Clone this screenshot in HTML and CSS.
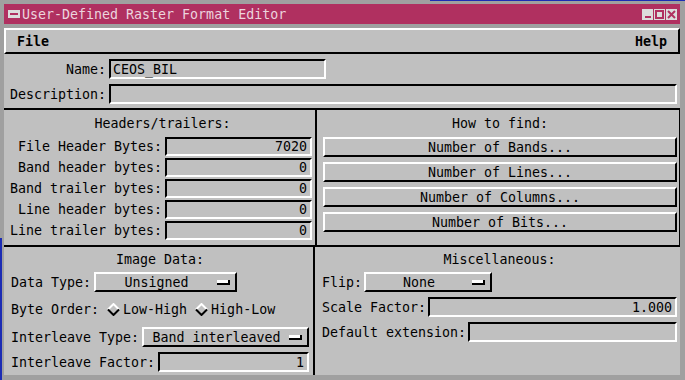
FILE: index.html
```html
<!DOCTYPE html>
<html lang="en">
<head>
  <meta charset="UTF-8" />
  <title>User-Defined Raster Format Editor</title>
  <link rel="stylesheet" href="styles.css">
</head>
<body>
  <div class="window">
    <div class="titlebar">
      <span class="wm-menu">
        <svg width="12" height="8" viewBox="0 0 12 8"><rect x="0" y="0" width="12" height="8" fill="#dcdcdc"/><rect x="2" y="3" width="8" height="2" fill="#b03060"/></svg>
      </span>
      <span class="title">User-Defined Raster Format Editor</span>
      <span class="wm-buttons">
        <span class="wm-btn"><svg width="11" height="11" viewBox="0 0 11 11"><rect x="3" y="7" width="6" height="2" fill="#b03060"/></svg></span>
        <span class="wm-btn"><svg width="11" height="11" viewBox="0 0 11 11"><rect x="2" y="2" width="7" height="7" fill="none" stroke="#b03060" stroke-width="2"/></svg></span>
        <span class="wm-btn"><svg width="11" height="11" viewBox="0 0 11 11"><path d="M2 2 L9 9 M9 2 L2 9" stroke="#b03060" stroke-width="2"/></svg></span>
      </span>
    </div>

    <div class="client">
      <div class="menubar">
        <span>File</span>
        <span>Help</span>
      </div>

      <div class="names">
        <div class="lbl">Name:</div>
        <div class="field name-field">CEOS_BIL</div>
        <div class="lbl">Description:</div>
        <div class="field"></div>
      </div>

      <div class="middle">
        <div class="panel headers">
          <div class="panel-title">Headers/trailers:</div>
          <div class="hdr-grid">
            <div class="lbl">File Header Bytes:</div><div class="field num">7020</div>
            <div class="lbl">Band header bytes:</div><div class="field num">0</div>
            <div class="lbl">Band trailer bytes:</div><div class="field num">0</div>
            <div class="lbl">Line header bytes:</div><div class="field num">0</div>
            <div class="lbl">Line trailer bytes:</div><div class="field num">0</div>
          </div>
        </div>
        <div class="panel howto">
          <div class="panel-title">How to find:</div>
          <div class="btn">Number of Bands...</div>
          <div class="btn">Number of Lines...</div>
          <div class="btn">Number of Columns...</div>
          <div class="btn">Number of Bits...</div>
        </div>
      </div>

      <div class="bottom">
        <div class="panel imagedata">
          <div class="panel-title">Image Data:</div>
          <div class="row r-type">
            <span>Data Type:</span>
            <div class="option w-type"><span class="opt-text">Unsigned</span><span class="opt-ind"></span></div>
          </div>
          <div class="row r-order">
            <span>Byte Order:</span>
            <span class="radio"><svg width="13" height="13" viewBox="0 0 13 13"><path d="M1 6.5 L6.5 1 L12 6.5" fill="none" stroke="#fff" stroke-width="2"/><path d="M1 6.5 L6.5 12 L12 6.5" fill="none" stroke="#000" stroke-width="2"/></svg>Low-High</span>
            <span class="radio"><svg width="13" height="13" viewBox="0 0 13 13"><path d="M1 6.5 L6.5 1 L12 6.5" fill="none" stroke="#fff" stroke-width="2"/><path d="M1 6.5 L6.5 12 L12 6.5" fill="none" stroke="#000" stroke-width="2"/></svg>High-Low</span>
          </div>
          <div class="row r-inter">
            <span>Interleave Type:</span>
            <div class="option w-inter"><span class="opt-text">Band interleaved</span><span class="opt-ind"></span></div>
          </div>
          <div class="row r-factor">
            <span>Interleave Factor:</span>
            <div class="field num grow">1</div>
          </div>
        </div>
        <div class="panel misc">
          <div class="panel-title">Miscellaneous:</div>
          <div class="row r-flip">
            <span>Flip:</span>
            <div class="option w-flip"><span class="opt-text">None</span><span class="opt-ind"></span></div>
          </div>
          <div class="row r-scale">
            <span>Scale Factor:</span>
            <div class="field num grow">1.000</div>
          </div>
          <div class="row r-ext">
            <span>Default extension:</span>
            <div class="field grow"></div>
          </div>
        </div>
      </div>
    </div>
  </div>
</body>
</html>
```

FILE: styles.css
```css
html, body {
  margin: 0;
  padding: 0;
}

body {
  width: 685px;
  height: 380px;
  overflow: hidden;
  background:
    linear-gradient(#1c2cb4, #1c2cb4) 0 238px / 2px 142px no-repeat,
    linear-gradient(#1c2cb4, #1c2cb4) 430px 0 / 255px 1px no-repeat,
    #a0a0a0;
  font-family: "DejaVu Sans Mono", monospace;
  font-size: 13.3px;
  color: #000;
}

.window {
  height: 380px;
  box-sizing: border-box;
  padding: 4px 5px 5px 4px;
  display: flex;
  flex-direction: column;
}

/* title bar */
.titlebar {
  height: 20px;
  background: #b03060;
  color: #ecd4de;
  display: flex;
  align-items: center;
  padding: 0 3px 0 4px;
  margin-bottom: 4px;
}

.wm-menu {
  display: flex;
  margin-right: 2px;
}

.title {
  flex: 1;
  white-space: pre;
}

.wm-buttons {
  display: flex;
  gap: 1px;
}

.wm-btn {
  width: 11px;
  height: 11px;
  background: #dcdcdc;
  display: flex;
}

/* client area */
.client {
  flex: 1;
  background: #c0c0c0;
  display: flex;
  flex-direction: column;
}

.menubar {
  height: 26px;
  box-sizing: border-box;
  border-top: 2px solid #fff;
  border-left: 2px solid #fff;
  border-bottom: 2px solid #000;
  border-right: 2px solid #000;
  padding: 0 11px;
  display: flex;
  justify-content: space-between;
  align-items: center;
  font-weight: bold;
}

.names {
  display: grid;
  grid-template-columns: 96px 1fr;
  column-gap: 3px;
  row-gap: 5px;
  padding: 5px 3px 4px 6px;
}

.lbl {
  text-align: right;
  white-space: pre;
  align-self: center;
}

.field {
  height: 20px;
  box-sizing: border-box;
  border-top: 2px solid #000;
  border-left: 2px solid #000;
  border-bottom: 2px solid #fff;
  border-right: 2px solid #fff;
  padding: 0 3px 0 2px;
  display: flex;
  align-items: center;
  white-space: pre;
}

.field.num {
  justify-content: flex-end;
}

.name-field {
  width: 217px;
}

.panel-title {
  height: 17px;
  line-height: 17px;
  text-align: center;
}

/* middle section */
.middle {
  display: flex;
  border-top: 2px solid #000;
  height: 137px;
  box-sizing: border-box;
}

.headers {
  width: 313px;
  border-right: 2px solid #000;
  padding: 5px 0 0 6px;
  box-sizing: border-box;
}

.headers .panel-title {
  margin-bottom: 5px;
}

.hdr-grid {
  display: grid;
  grid-template-columns: 152px 147px;
  column-gap: 3px;
  row-gap: 2px;
}

.hdr-grid .field {
  height: 19px;
}

.howto {
  flex: 1;
  padding: 5px 2px 0 6px;
  border-right: 1px solid #000;
}

.howto .panel-title {
  margin-bottom: 5px;
}

.btn {
  height: 20px;
  box-sizing: border-box;
  border-top: 2px solid #fff;
  border-left: 2px solid #fff;
  border-bottom: 2px solid #000;
  border-right: 2px solid #000;
  display: flex;
  justify-content: center;
  align-items: center;
  margin-bottom: 5px;
}

/* bottom section */
.bottom {
  flex: 1;
  display: flex;
  border-top: 2px solid #000;
}

.imagedata {
  width: 311px;
  border-right: 2px solid #000;
  padding: 4px 4px 0 7px;
  box-sizing: border-box;
}

.misc {
  flex: 1;
  padding: 4px 3px 0 7px;
}

.row {
  display: flex;
  align-items: center;
  gap: 3px;
  height: 20px;
  white-space: pre;
}

.misc .row {
  gap: 2px;
}

.r-type, .r-flip {
  margin-top: 4px;
}

.r-order {
  margin-top: 7px;
}

.r-inter {
  margin-top: 8px;
}

.r-factor, .r-scale, .r-ext {
  margin-top: 5px;
}

.grow {
  flex: 1;
}

.option {
  height: 20px;
  box-sizing: border-box;
  border-top: 2px solid #fff;
  border-left: 2px solid #fff;
  border-bottom: 2px solid #000;
  border-right: 2px solid #000;
  display: flex;
  align-items: center;
  padding-right: 5px;
}

.opt-text {
  flex: 1;
  text-align: center;
}

.opt-ind {
  width: 13px;
  height: 5px;
  box-sizing: border-box;
  background: #fff;
  border-bottom: 2px solid #000;
  border-right: 2px solid #000;
}

.w-type {
  width: 143px;
}

.w-inter {
  width: 167px;
}

.w-flip {
  width: 128px;
}

.radio {
  display: flex;
  align-items: center;
  gap: 3px;
  margin-left: 5px;
}
```
